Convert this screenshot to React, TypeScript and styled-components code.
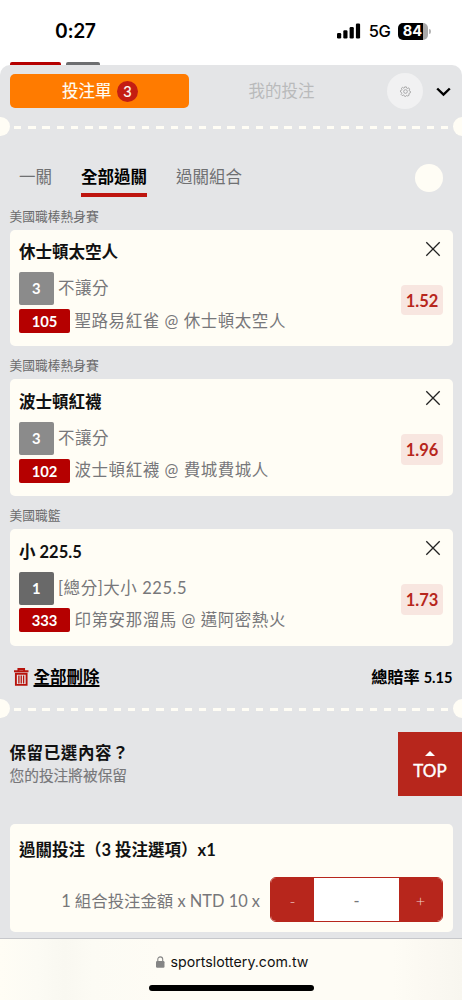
import React from "react";
import styled, { createGlobalStyle } from "styled-components";

const cream = "#fffdf5";
const brand = "#b7261c";

const GlobalStyle = createGlobalStyle`
  *, *::before, *::after { box-sizing: border-box; }
  body {
    margin: 0;
    background: #fff;
    font-family: Lato, "Noto Sans CJK TC", sans-serif;
    font-size: 16.5px;
    color: #111;
  }
  button { font: inherit; border: 0; padding: 0; background: none; color: inherit; }
`;

const Screen = styled.div`
  position: relative;
  width: 462px;
  height: 1000px;
  overflow: hidden;
  display: flex;
  flex-direction: column;
  background: #fff;
`;

const StatusBar = styled.header`
  height: 62px;
  flex: none;
  display: flex;
  align-items: center;
  padding: 0 31px 0 55px;
  font-family: Inter, sans-serif;
  color: #000;
`;

const Clock = styled.time`
  flex: 1;
  font-size: 19.4px;
  font-weight: 600;
  line-height: 24px;
  letter-spacing: -0.4px;
`;

const Network = styled.span`
  font-size: 16.5px;
  font-weight: 500;
  line-height: 24px;
  letter-spacing: -0.4px;
  margin: 0 7.5px 0 8px;
`;

const Battery = styled.div`
  width: 30px;
  height: 17px;
  padding-right: 1px;
  display: grid;
  place-items: center;
  border-radius: 5px;
  background: linear-gradient(90deg, #000 25px, #a9a9a9 25px);
  color: #fff;
  font-size: 14.6px;
  font-weight: 700;
  line-height: 17px;
`;

const BatteryTip = styled.i`
  width: 2px;
  height: 5px;
  margin-left: 1px;
  border-radius: 0 2px 2px 0;
  background: #b5b5b5;
`;

const PageTabs = styled.div`
  height: 3px;
  flex: none;
  display: flex;
  gap: 5px;
  padding-left: 9.5px;
`;

const PageTab = styled.i<{ $color: string; $width: number }>`
  width: ${(p) => p.$width}px;
  border-radius: 2px 2px 0 0;
  background: ${(p) => p.$color};
`;

const Sheet = styled.main`
  flex: 1;
  min-height: 0;
  border-radius: 10px 10px 0 0;
  background: #e4e5e7;
`;

const SheetHeader = styled.div`
  height: 52px;
  display: flex;
  align-items: center;
  padding: 0 9.5px;
`;

const SlipButton = styled.button`
  width: 179.5px;
  height: 33.5px;
  display: flex;
  align-items: center;
  justify-content: center;
  gap: 5.5px;
  padding-left: 1.5px;
  border-radius: 5px;
  background: #ff7b00;
  color: ${cream};
  line-height: 24px;
  -webkit-text-stroke: 0.15px;
`;

const Count = styled.span`
  width: 21px;
  height: 21px;
  border-radius: 50%;
  background: #c41d12;
  font-size: 14.5px;
  line-height: 22px;
  text-align: center;
`;

const MyBets = styled.button`
  width: 185px;
  color: #b9babb;
  line-height: 24px;
`;

const Settings = styled.button`
  width: 36px;
  height: 36px;
  display: grid;
  place-items: center;
  margin-left: 13px;
  border-radius: 50%;
  background: #f1f1f2;
`;

const Collapse = styled.button`
  height: 24px;
  display: grid;
  place-items: center;
  margin-left: 13px;
  padding-top: 1px;
`;

const Perforation = styled.div`
  position: relative;
  height: 19px;
  display: flex;
  align-items: center;
  padding: 2px 13px 0 13.8px;

  &::before, &::after {
    content: "";
    position: absolute;
    top: 0;
    width: 19px;
    height: 19px;
    border-radius: 50%;
    background: ${cream};
  }
  &::before { left: -9.5px; }
  &::after { right: -9.5px; }
`;

const Dashes = styled.div`
  flex: 1;
  height: 3px;
  background: repeating-linear-gradient(90deg, ${cream} 0 7.4px, transparent 7.4px 14.23px);
`;

const TabRow = styled.nav`
  height: 70.5px;
  display: flex;
  align-items: flex-start;
  gap: 29px;
  padding: 28px 19px 0;
`;

const Tab = styled.button<{ $active?: boolean }>`
  height: 33px;
  line-height: 26px;
  display: flex;
  color: ${(p) => (p.$active ? "#000" : "#6f7072")};
  font-weight: ${(p) => (p.$active ? 700 : 400)};
  border-bottom: 4px solid ${(p) => (p.$active ? "#be150f" : "transparent")};
`;

const Knob = styled.button`
  width: 28px;
  height: 28px;
  margin: 0 0 0 auto;
  border-radius: 50%;
  background: ${cream};
`;

const League = styled.h3`
  margin: 0;
  height: 23.4px;
  padding-left: 9.5px;
  font-size: 12.75px;
  font-weight: 400;
  line-height: 18px;
  color: #6b6b6c;
`;

const Selection = styled.section`
  height: 149.6px;
`;

const Card = styled.article`
  height: 116.5px;
  margin: 0 9.5px;
  padding: 9.5px 9.5px 0;
  display: flex;
  justify-content: space-between;
  border-radius: 5px;
  background: ${cream};
`;

const Pick = styled.h4`
  margin: 0;
  height: 33px;
  font-size: 16.5px;
  font-weight: 700;
  line-height: 26px;
  color: #111;
`;

const Line = styled.div`
  display: flex;
  align-items: center;
  gap: 4.5px;
  margin-bottom: 3.2px;
  white-space: pre;
  line-height: 25px;
  letter-spacing: 0.55px;
  color: #77777a;
`;

const Tag = styled.span<{ $kind: "code" | "light" | "dark" }>`
  width: ${(p) => (p.$kind === "code" ? 51 : 34.5)}px;
  height: ${(p) => (p.$kind === "code" ? 24 : 33)}px;
  line-height: ${(p) => (p.$kind === "code" ? 25 : 33)}px;
  border-radius: 2px;
  background: ${(p) => ({ code: "#b50000", light: "#8b8b8b", dark: "#696969" })[p.$kind]};
  color: #fff;
  font-size: 14.8px;
  font-weight: 700;
  letter-spacing: 0;
  text-align: center;
`;

const CardSide = styled.div`
  display: flex;
  flex-direction: column;
  align-items: flex-end;
`;

const Close = styled.button`
  height: 16px;
  margin: 1.5px 2px 0 0;
  display: flex;
`;

const Odds = styled.span`
  width: 42px;
  height: 30.5px;
  margin-top: 28px;
  border-radius: 4px;
  background: #f8e6e0;
  color: ${brand};
  font-size: 16.5px;
  font-weight: 700;
  line-height: 32px;
  text-align: center;
`;

const SummaryRow = styled.div`
  height: 21px;
  margin: 11px 0 11.7px;
  display: flex;
  align-items: center;
  padding: 0 9.5px 0 14px;
  font-weight: 700;
  color: #000;
`;

const ClearAll = styled.button`
  display: flex;
  align-items: center;
  gap: 5px;
  margin-right: auto;
  line-height: 24px;
`;

const Underlined = styled.span`
  text-decoration: underline;
  text-decoration-thickness: 1.5px;
  text-underline-offset: 2px;
`;

const TotalOdds = styled.div`
  line-height: 25px;
  font-size: 16.2px;
  white-space: pre;
`;

const TotalValue = styled.span`
  font-size: 14.6px;
`;

const Keep = styled.section`
  height: 106.5px;
  padding: 23.5px 0 0 9.5px;
`;

const KeepTitle = styled.h4`
  margin: 0;
  font-size: 16.5px;
  font-weight: 700;
  line-height: 24px;
  letter-spacing: 0.6px;
`;

const KeepNote = styled.p`
  margin: 0;
  font-size: 14.7px;
  line-height: 20px;
  color: #77777a;
  -webkit-text-stroke: 0.15px;
`;

const StakeCard = styled(Card)`
  height: 107.3px;
  padding-top: 13px;
  flex-direction: column;
  justify-content: flex-start;
`;

const StakeTitle = styled(Pick)`
  height: 40px;
  line-height: 27px;
`;

const StakeRow = styled.div`
  display: flex;
  align-items: center;
  justify-content: flex-end;
  gap: 10px;
  color: #77777a;
  font-size: 16.4px;
  white-space: pre;
`;

const Stepper = styled.div`
  width: 173px;
  height: 45px;
  display: grid;
  grid-template-columns: 43px 1fr 43px;
  border: 1px solid ${brand};
  border-radius: 6px;
  overflow: hidden;
`;

const StepButton = styled.button`
  background: ${brand};
  color: #f0cfca;
  font-weight: 300;
`;

const Amount = styled.output`
  background: #fff;
  text-align: center;
  line-height: 45px;
`;

const TopButton = styled.button`
  position: absolute;
  right: 0;
  top: 732px;
  width: 64px;
  height: 64px;
  display: flex;
  flex-direction: column;
  align-items: center;
  padding-top: 19px;
  gap: 2px;
  background: ${brand};
  color: #fff;
  font-size: 17px;
  line-height: 25px;
  -webkit-text-stroke: 0.4px;
`;

const BrowserBar = styled.footer`
  height: 62px;
  flex: none;
  display: flex;
  flex-direction: column;
  align-items: center;
  border-top: 1px solid #c6c7cb;
  background: linear-gradient(90deg, #fffdf5 0%, #fcfbf4 8%, #f9f8f1 14%, #fcfbf4 20%, #fefcf5 35%, #fefcf5 85%, #f8f6ef 100%);
`;

const Address = styled.div`
  height: 24px;
  margin-top: 11px;
  display: flex;
  align-items: center;
  gap: 6px;
  padding-left: 2.5px;
  font-family: Inter, sans-serif;
  font-size: 14.2px;
  line-height: 24px;
  color: #111;
`;

const HomeIndicator = styled.i`
  width: 165px;
  height: 6px;
  margin-top: 10.5px;
  border-radius: 3px;
  background: #000;
`;

const SignalIcon = () => (
  <svg width="24" height="16" viewBox="0 0 24 16">
    <rect x="0" y="10" width="4.2" height="5.5" rx="1.2" />
    <rect x="6.3" y="7.3" width="4.2" height="8.2" rx="1.2" />
    <rect x="12.6" y="4" width="4.2" height="11.5" rx="1.2" />
    <rect x="18.9" y="0.5" width="4.2" height="15" rx="1.2" />
  </svg>
);

const GearIcon = () => (
  <svg width="11" height="11" viewBox="0 0 24 24" fill="none" stroke="#9c9c9d" strokeWidth="1.8" strokeLinejoin="round">
    <path d="M10 2h4l.8 2.8 1.6.7L19 4l2 3-1 2.3.5 1.7L23 12l-.5 3-2.5 1-.8 1.4.8 2.6-3 2-2.2-1.2-1.8.5L12 23l-2-.5-1-2.2-1.6-.7L5 21l-2.5-2.5L4 16l-.6-1.6L1 13v-3l2.6-1 .7-1.6L3 5l2.5-2L8 4.7l1.4-.5z" />
    <circle cx="12" cy="12" r="4" />
  </svg>
);

const CloseIcon = () => (
  <svg width="16" height="16" viewBox="0 0 16 16" fill="none" stroke="#222" strokeWidth="1.3">
    <path d="M1.3 1.3 14.7 14.7M14.7 1.3 1.3 14.7" />
  </svg>
);

const TrashIcon = () => (
  <svg width="14.5" height="18" viewBox="0 0 14.5 18" fill="none" stroke="#b7130c">
    <path d="M0 3.2h14.5M4.4 3V1h5.7V3" strokeWidth="1.9" />
    <path d="M1.9 5.7h10.7v11.2H1.9z" strokeWidth="1.9" />
    <path d="M4.9 7.5v8M7.25 7.5v8M9.6 7.5v8" strokeWidth="1.3" />
  </svg>
);

const LockIcon = () => (
  <svg width="8.5" height="12" viewBox="0 0 8.5 12">
    <rect y="5" width="8.5" height="6.8" rx="1.2" fill="#858585" />
    <path d="M1.8 5.5V3.3a2.45 2.45 0 0 1 4.9 0v2.2" fill="none" stroke="#858585" strokeWidth="1.1" />
  </svg>
);

type Bet = {
  league: string;
  pick: string;
  min: string;
  dark?: boolean;
  market: string;
  code: string;
  game: string;
  odds: string;
};

const bets: Bet[] = [
  { league: "美國職棒熱身賽", pick: "休士頓太空人", min: "3", market: "不讓分", code: "105", game: "聖路易紅雀 @ 休士頓太空人", odds: "1.52" },
  { league: "美國職棒熱身賽", pick: "波士頓紅襪", min: "3", market: "不讓分", code: "102", game: "波士頓紅襪 @ 費城費城人", odds: "1.96" },
  { league: "美國職籃", pick: "小 225.5", min: "1", dark: true, market: "[總分]大小 225.5", code: "333", game: "印第安那溜馬 @ 邁阿密熱火", odds: "1.73" },
];

export default function App() {
  return (
    <Screen>
      <GlobalStyle />
      <StatusBar>
        <Clock>0:27</Clock>
        <SignalIcon />
        <Network>5G</Network>
        <Battery>84</Battery>
        <BatteryTip />
      </StatusBar>
      <PageTabs>
        <PageTab $color="#b50000" $width={51} />
        <PageTab $color="#6d6e70" $width={34.5} />
      </PageTabs>
      <Sheet>
        <SheetHeader>
          <SlipButton>
            投注單<Count>3</Count>
          </SlipButton>
          <MyBets>我的投注</MyBets>
          <Settings>
            <GearIcon />
          </Settings>
          <Collapse>
            <svg width="15" height="10" viewBox="0 0 15 10" fill="none" stroke="#000" strokeWidth="2.4">
              <path d="M1.2 1.5 7.5 7.6 13.8 1.5" />
            </svg>
          </Collapse>
        </SheetHeader>
        <Perforation>
          <Dashes />
        </Perforation>
        <TabRow>
          <Tab>一關</Tab>
          <Tab $active>全部過關</Tab>
          <Tab>過關組合</Tab>
          <Knob />
        </TabRow>
        {bets.map((bet) => (
          <Selection key={bet.code}>
            <League>{bet.league}</League>
            <Card>
              <div>
                <Pick>{bet.pick}</Pick>
                <Line>
                  <Tag $kind={bet.dark ? "dark" : "light"}>{bet.min}</Tag>
                  {bet.market}
                </Line>
                <Line>
                  <Tag $kind="code">{bet.code}</Tag>
                  {bet.game}
                </Line>
              </div>
              <CardSide>
                <Close>
                  <CloseIcon />
                </Close>
                <Odds>{bet.odds}</Odds>
              </CardSide>
            </Card>
          </Selection>
        ))}
        <SummaryRow>
          <ClearAll>
            <TrashIcon />
            <Underlined>全部刪除</Underlined>
          </ClearAll>
          <TotalOdds>
            總賠率 <TotalValue>5.15</TotalValue>
          </TotalOdds>
        </SummaryRow>
        <Perforation>
          <Dashes />
        </Perforation>
        <Keep>
          <KeepTitle>保留已選內容？</KeepTitle>
          <KeepNote>您的投注將被保留</KeepNote>
        </Keep>
        <StakeCard>
          <StakeTitle>過關投注（3 投注選項）x1</StakeTitle>
          <StakeRow>
            1 組合投注金額 x NTD 10 x
            <Stepper>
              <StepButton>-</StepButton>
              <Amount>-</Amount>
              <StepButton>+</StepButton>
            </Stepper>
          </StakeRow>
        </StakeCard>
      </Sheet>
      <TopButton>
        <svg width="10" height="5" viewBox="0 0 10 5">
          <path d="M0 5 5 0l5 5z" fill="#fff" />
        </svg>
        TOP
      </TopButton>
      <BrowserBar>
        <Address>
          <LockIcon />
          sportslottery.com.tw
        </Address>
        <HomeIndicator />
      </BrowserBar>
    </Screen>
  );
}
